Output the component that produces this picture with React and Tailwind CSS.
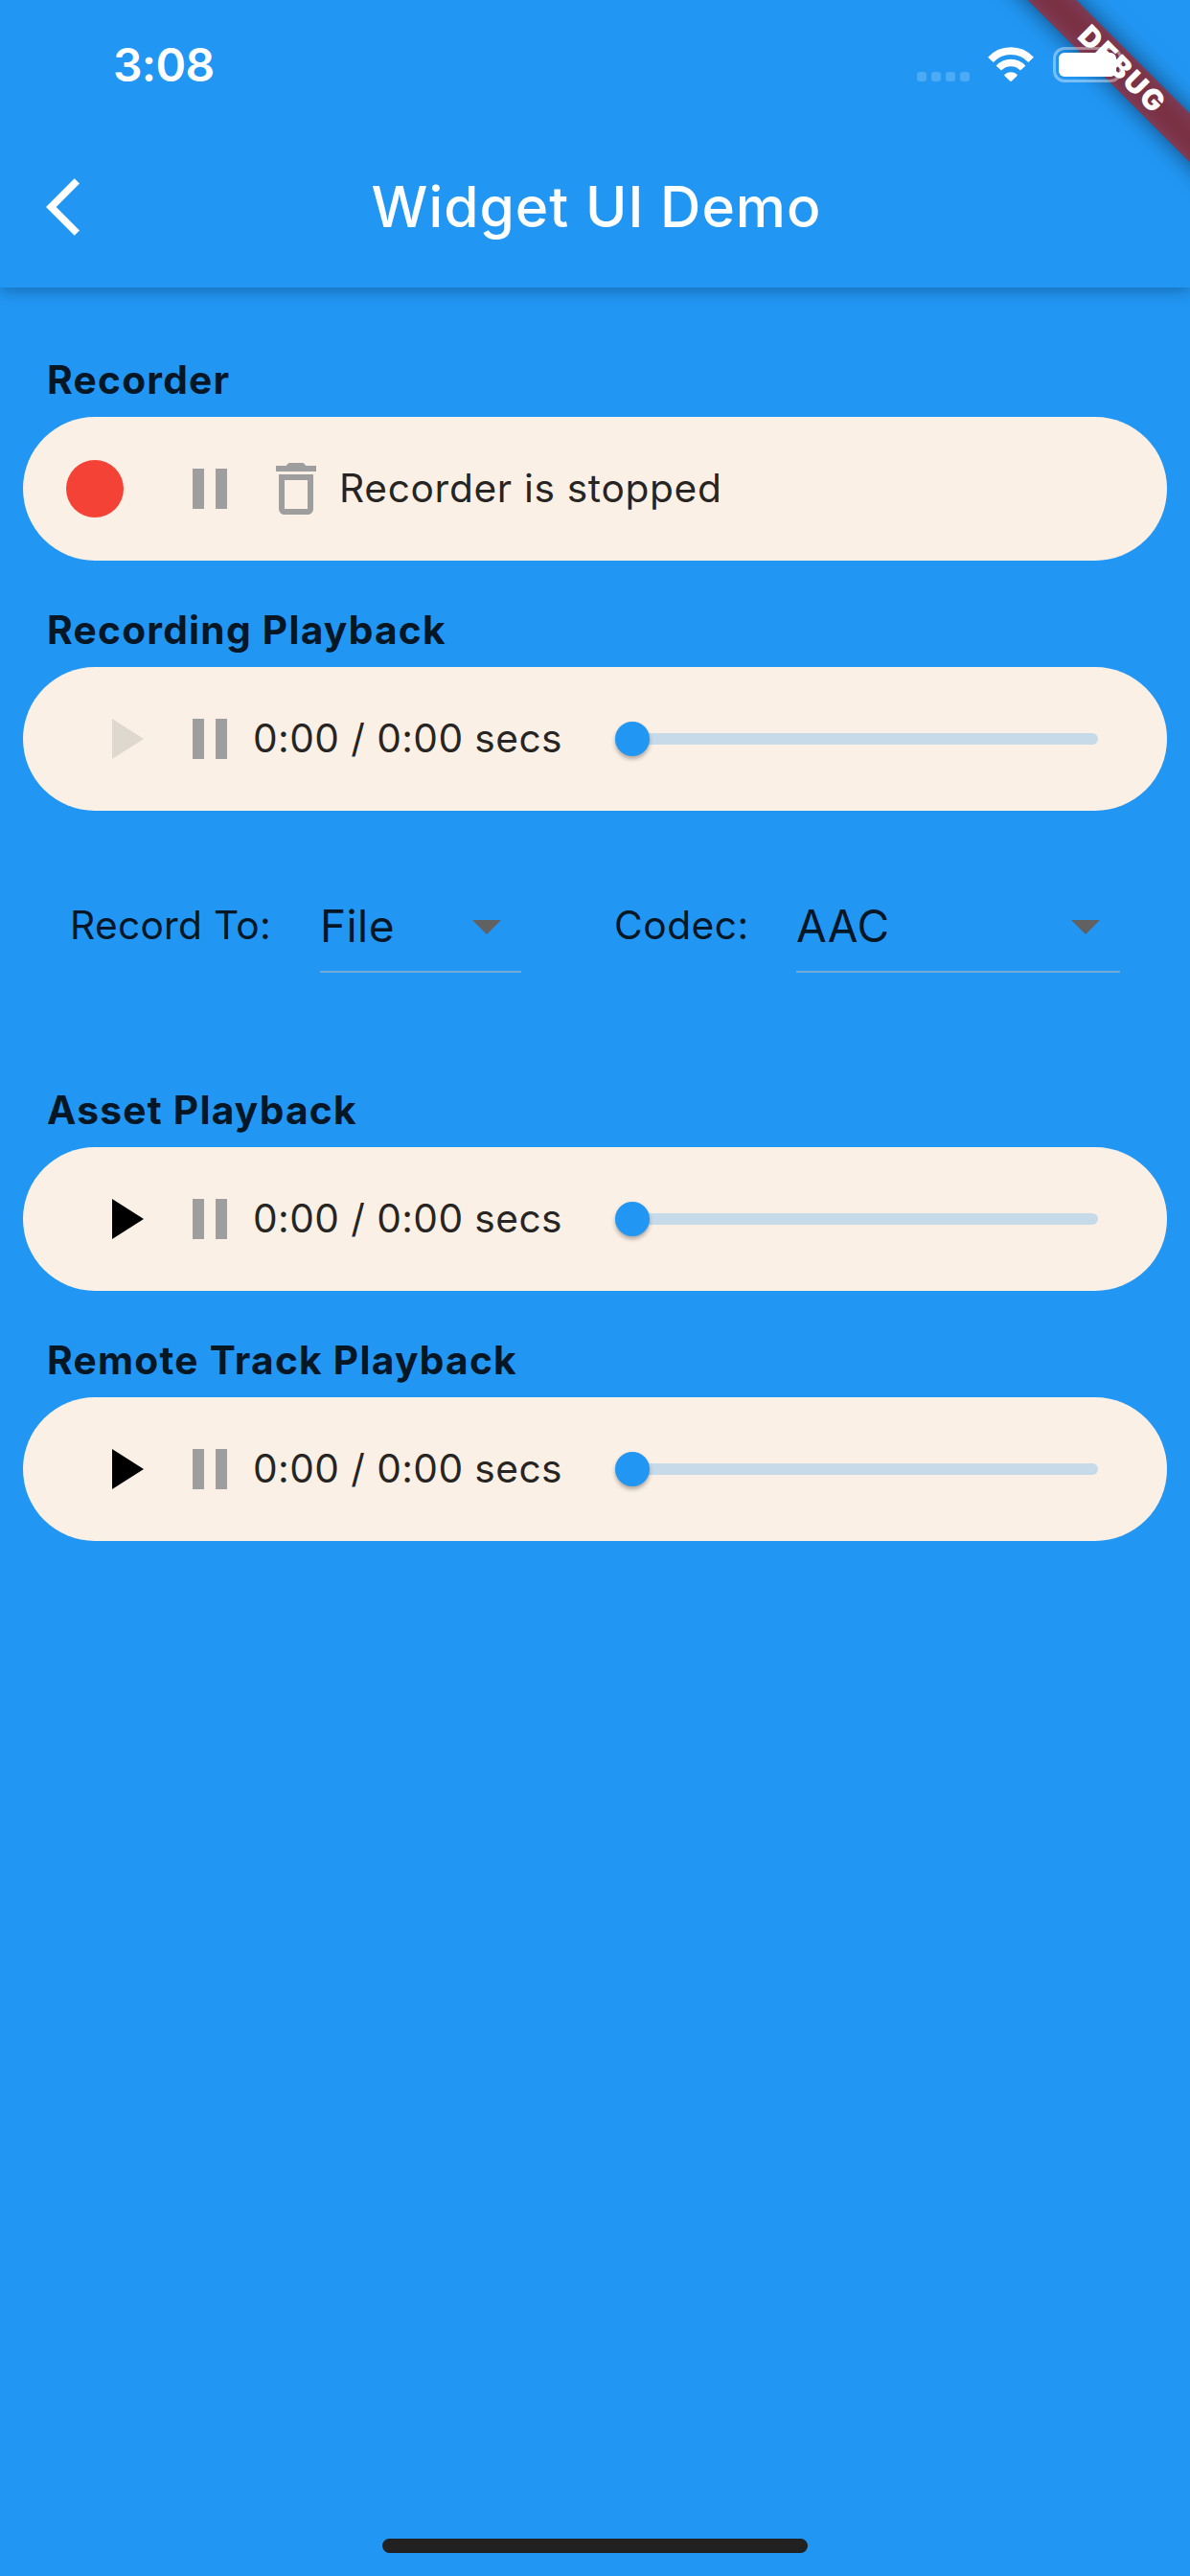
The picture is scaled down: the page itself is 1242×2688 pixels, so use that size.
import React from "react";

function Icon({ d, className }) {
  return (
    <svg viewBox="0 0 24 24" className={`size-[72px] shrink-0 ${className}`} fill="currentColor">
      <path d={d} />
    </svg>
  );
}

const PLAY = "M8 5v14l11-7z";
const PAUSE = "M6 19h4V5H6v14zm8-14v14h4V5h-4z";
const TRASH =
  "M6 19c0 1.1.9 2 2 2h8c1.1 0 2-.9 2-2V7H6v12zM8 9h8v10H8V9zm7.5-5l-1-1h-5l-1 1H5v2h14V4z";
const BACK = "M11.67 3.87L9.9 2.1 0 12l9.9 9.9 1.77-1.77L3.54 12z";
const ARROW_DOWN = "M7 10l5 5 5-5z";

function StatusBar() {
  return (
    <div className="flex h-[132px] items-start justify-between pl-[118px] pr-[71px] text-white">
      <span className="mt-[38px] text-[48px] leading-[60px] font-semibold tracking-[-0.7px]">3:08</span>
      <div className="relative z-20 mt-[49px] flex">
        <div className="mt-[26px] flex gap-[5px]">
          {[0, 1, 2, 3].map((i) => (
            <span key={i} className="size-[10px] rounded-[3px] bg-white/20" />
          ))}
        </div>
        <svg viewBox="0 0 48 37" className="ml-[19px] h-[37px] w-[48px]" fill="none" stroke="white">
          <path d="M2.9 13.4A28.8 28.8 0 0 1 45.1 13.4" strokeWidth="7.7" />
          <path d="M11.4 22.1A17 17 0 0 1 36.6 22.1" strokeWidth="7.3" />
          <path d="M17.6 30.2Q16.7 29.3 17.7 28.4A10.2 10.2 0 0 1 30.3 28.4Q31.3 29.3 30.4 30.2L25 35.6Q24 36.5 23 35.6Z" fill="white" stroke="none" />
        </svg>
        <div className="ml-[20px] h-[37px] w-[72px] rounded-[12px] border-[3px] border-white/40 p-[3px]">
          <div className="h-[25px] w-[60px] rounded-[6px] bg-white" />
        </div>
      </div>
    </div>
  );
}

function DebugBanner() {
  return (
    <div className="pointer-events-none absolute top-0 right-0 z-10 size-[300px] overflow-hidden">
      <div className="absolute top-[54px] right-[-128px] h-[36px] w-[400px] rotate-45">
        <div className="absolute inset-0 bg-black/50 blur-[12px]" />
        <div className="absolute inset-0 flex items-center justify-center bg-[#b71c1c]/63">
          <span className="-mt-[3px] pl-[3px] text-[30px] leading-none font-black tracking-[2.2px] text-white">
            DEBUG
          </span>
        </div>
      </div>
    </div>
  );
}

function Section({ title, children }) {
  return (
    <section>
      <h2 className="h-[63px] pl-[25px] text-[40.7px] leading-[50px] font-bold tracking-[1.25px] text-black/87">
        {title}
      </h2>
      <div className="flex h-[150px] items-center rounded-full bg-[#faf0e6]">{children}</div>
    </section>
  );
}

function Player({ playColor }) {
  return (
    <>
      <Icon d={PLAY} className={`ml-[69px] ${playColor}`} />
      <Icon d={PAUSE} className="ml-[18px] text-[#9e9e9e]" />
      <span className="ml-[9px] text-[40.7px] leading-[48px] tracking-[0.41px] whitespace-nowrap text-black/87">
        0:00 / 0:00 secs
      </span>
      <div className="mr-[72px] ml-auto flex w-[504px] items-center">
        <span className="z-[1] size-[36px] rounded-full bg-[#2196f3] shadow-[0_3px_4px_rgba(0,0,0,0.3)]" />
        <span className="-ml-[18px] h-[12px] flex-1 rounded-full bg-[#c6dae9]" />
      </div>
    </>
  );
}

function Dropdown({ value, className }) {
  return (
    <div className={`flex h-[144px] flex-col ${className}`}>
      <div className="flex h-[119px] items-center justify-between pt-[25px]">
        <span className="text-[46px] leading-[56px] tracking-[0.4px]">{value}</span>
        <Icon d={ARROW_DOWN} className="text-[#616161]" />
      </div>
      <div className="h-[2px] bg-[#6faadb]" />
    </div>
  );
}

export default function App() {
  return (
    <div className="relative flex h-[2688px] w-[1242px] flex-col overflow-hidden bg-[#2196f3] font-['Inter','Liberation_Sans',sans-serif]">
      <header className="h-[300px] shrink-0 bg-[#2196f3] shadow-[0_4px_14px_rgba(0,0,0,0.26)]">
        <StatusBar />
        <div className="grid h-[168px] grid-cols-[120px_1fr_120px] items-center text-white">
          <Icon d={BACK} className="ml-[48px]" />
          <h1 className="pl-[3px] text-center text-[58.7px] leading-[72px] font-medium tracking-[1px]">
            Widget UI Demo
          </h1>
        </div>
      </header>
      <DebugBanner />

      <main className="flex flex-1 flex-col gap-[48px] px-[24px] pt-[72px]">
        <Section title="Recorder">
          <span className="ml-[45px] size-[60px] rounded-full bg-[#f44336]" />
          <Icon d={PAUSE} className="ml-[54px] text-[#9e9e9e]" />
          <Icon d={TRASH} className="ml-[18px] text-[#9e9e9e]" />
          <span className="ml-[9px] text-[40.7px] leading-[48px] tracking-[0.66px] text-black/87">
            Recorder is stopped
          </span>
        </Section>

        <Section title="Recording Playback">
          <Player playColor="text-[#dfd8cf]" />
        </Section>

        <div className="mb-[48px] flex h-[144px] items-center pl-[49px] text-black/87">
          <span className="w-[261px] text-[40.7px] leading-[48px] tracking-[0.29px]">Record To:</span>
          <Dropdown value="File" className="w-[210px]" />
          <span className="ml-[97px] w-[190px] text-[40.7px] leading-[48px] tracking-[0.52px]">Codec:</span>
          <Dropdown value="AAC" className="w-[338px]" />
        </div>

        <Section title="Asset Playback">
          <Player playColor="text-black" />
        </Section>

        <Section title="Remote Track Playback">
          <Player playColor="text-black" />
        </Section>
      </main>

      <div className="mx-auto mb-[24px] h-[15px] w-[444px] shrink-0 rounded-full bg-[#212121]" />
    </div>
  );
}
